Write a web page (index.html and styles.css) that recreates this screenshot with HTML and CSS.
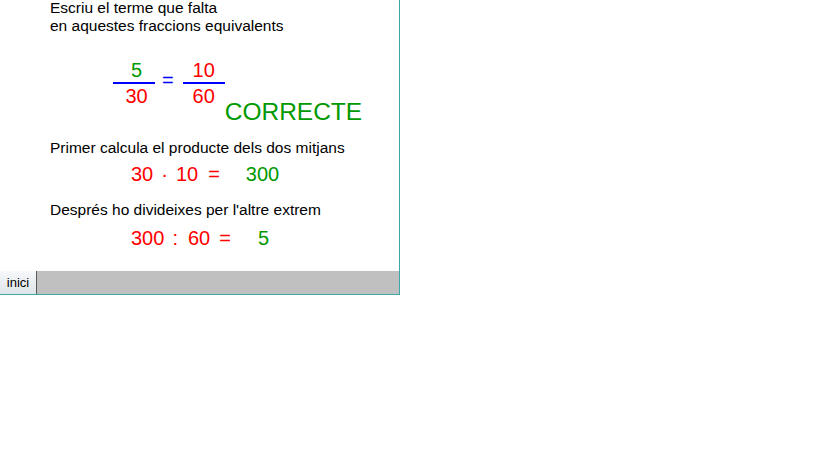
FILE: index.html
```html
<!DOCTYPE html>
<html lang="ca">
<head>
  <meta charset="UTF-8" />
  <title>Fraccions equivalents</title>
  <link rel="stylesheet" href="styles.css">
</head>
<body>
  <div class="applet">
    <div class="board">
      <p class="text prompt">Escriu el terme que falta<br>en aquestes fraccions equivalents</p>

      <div class="fractions">
        <div class="frac frac-first">
          <span class="num green">5</span>
          <span class="bar-line"></span>
          <span class="den red">30</span>
        </div>
        <span class="eq blue">=</span>
        <div class="frac">
          <span class="num red">10</span>
          <span class="bar-line"></span>
          <span class="den red">60</span>
        </div>
        <span class="verdict">CORRECTE</span>
      </div>

      <p class="text step-one">Primer calcula el producte dels dos mitjans</p>
      <div class="calc calc-one">
        <span class="red">30</span>
        <span class="red op-dot">·</span>
        <span class="red op-ten">10</span>
        <span class="red op-eq1">=</span>
        <span class="green op-res1">300</span>
      </div>

      <p class="text step-two">Després ho divideixes per l'altre extrem</p>
      <div class="calc calc-two">
        <span class="red">300</span>
        <span class="red op-colon">:</span>
        <span class="red op-sixty">60</span>
        <span class="red op-eq2">=</span>
        <span class="green op-res2">5</span>
      </div>
    </div>
    <div class="toolbar">
      <button class="btn-inici">inici</button>
    </div>
  </div>
</body>
</html>
```

FILE: styles.css
```css
body {
  margin: 0;
  background: #ffffff;
  font-family: "Liberation Sans", Arial, sans-serif;
}
.applet {
  width: 399px;
  border-right: 1px solid #3ca8a8;
  border-bottom: 1px solid #3ca8a8;
}
.board {
  height: 271px;
  padding-left: 50px;
  box-sizing: border-box;
  overflow: hidden;
  background: #ffffff;
}
.text {
  margin: 0;
  font-size: 15.5px;
  line-height: 18px;
  color: #000000;
}
.prompt {
  margin-top: -1px;
}
.red { color: #ff0000; }
.green { color: #009900; }
.blue { color: #0000ff; }

/* fraccions */
.fractions {
  display: flex;
  align-items: flex-start;
  margin-top: 24px;
  margin-left: 63px;
  height: 49px;
  font-size: 20px;
  line-height: 23px;
}
.frac {
  display: flex;
  flex-direction: column;
  align-items: center;
  width: 42px;
}
.frac-first .num,
.frac-first .den {
  padding-left: 5px;
}
.bar-line {
  display: block;
  width: 42px;
  height: 2px;
  background: #0000ff;
}
.den {
  margin-top: 1px;
}
.eq {
  margin: 10px 9px 0 7px;
}
.verdict {
  margin-top: 39px;
  margin-left: 0;
  font-size: 24.5px;
  line-height: 28px;
  color: #009900;
  white-space: nowrap;
}

.step-one { margin-top: 31px; }
.step-two { margin-top: 15px; }

/* operacions */
.calc {
  display: flex;
  margin-left: 81px;
  font-size: 20px;
  line-height: 23px;
}
.calc-one { margin-top: 6px; }
.calc-two { margin-top: 8px; }
.op-dot { margin-left: 8px; }
.op-ten { margin-left: 8px; }
.op-eq1 { margin-left: 10px; }
.op-res1 { margin-left: 26px; }
.op-colon { margin-left: 8px; }
.op-sixty { margin-left: 10px; }
.op-eq2 { margin-left: 9px; }
.op-res2 { margin-left: 27px; }

/* barra inferior */
.toolbar {
  display: flex;
  height: 23px;
  background: #c0c0c0;
}
.btn-inici {
  width: 37px;
  height: 23px;
  margin: 0;
  padding: 0;
  border: none;
  border-right: 1px solid #5a5a5a;
  background: linear-gradient(#f6f8fa, #dfe4e9);
  font-family: "Liberation Sans", Arial, sans-serif;
  font-size: 13px;
  color: #000000;
  cursor: pointer;
}
```
